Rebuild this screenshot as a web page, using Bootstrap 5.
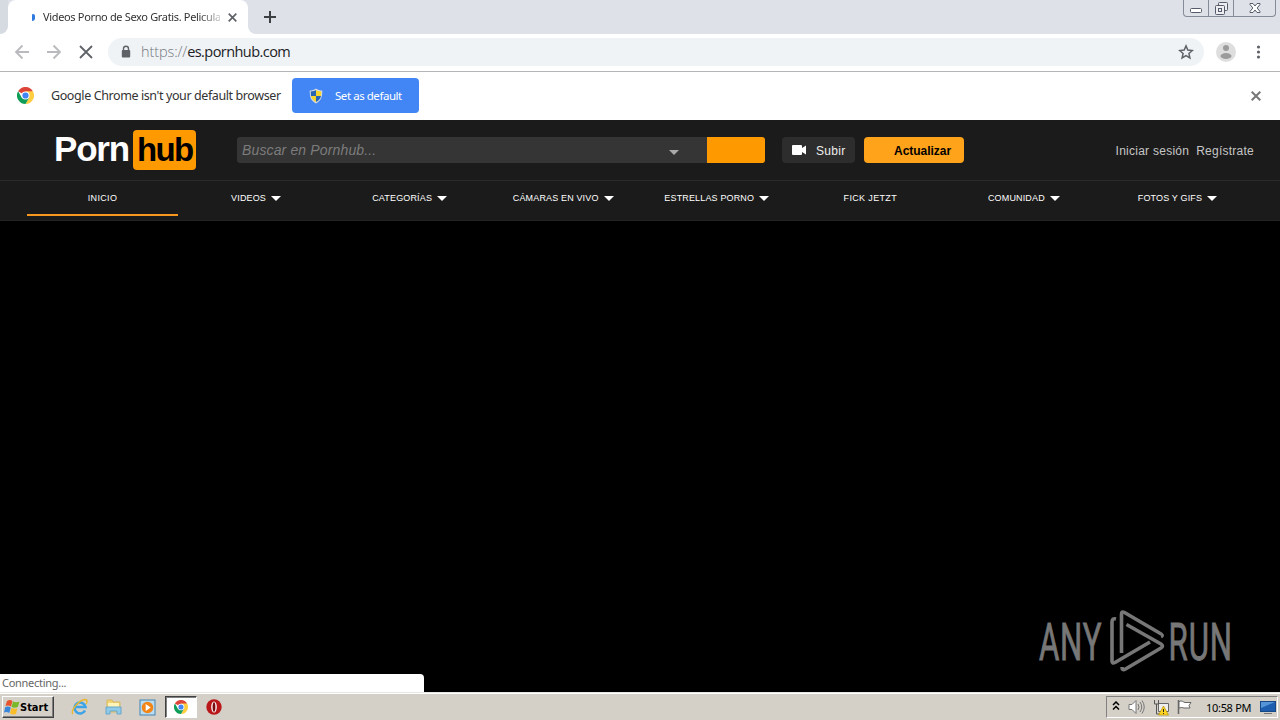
<!DOCTYPE html>
<html lang="es">
<head>
    <meta charset="utf-8">
    <title>Browser window</title>
    <meta name="viewport" content="width=device-width, initial-scale=1">
    <link href="https://cdn.jsdelivr.net/npm/bootstrap@5.3.0/dist/css/bootstrap.min.css" rel="stylesheet">
    <script src="https://cdn.jsdelivr.net/npm/bootstrap@5.3.0/dist/js/bootstrap.bundle.min.js"></script>
    <style>
        body {
            height: 720px;
            overflow: hidden;
            background: #000;
            font-family: "Noto Sans", "DejaVu Sans", sans-serif;
            font-size: 12px;
            line-height: 1;
            white-space: nowrap;
        }
        svg { display: block; flex: none; }

        /* Tab strip */
        .tab-strip { height: 34px; background: #dee1e8; }
        .tab-stub { width: 8px; background: #fff; }
        .tab-stub div { height: 34px; background: #d6dae1; border-radius: 0 0 8px 0; }
        .browser-tab { width: 240px; height: 34px; background: #fff; border-radius: 8px 8px 0 0; padding-left: 24px; }
        .tab-dot { width: 3px; height: 7px; background: #2d7be0; border-radius: 1px 2px 3px 0; margin-right: 8px; }
        .tab-title {
            width: 177px;
            line-height: 16px;
            color: #333;
            font-size: 11px;
            letter-spacing: -.34px;
            -webkit-mask-image: linear-gradient(90deg, #000 88%, rgba(0, 0, 0, .25));
        }
        .after-tab { width: 8px; background: #fff; }
        .after-tab div { height: 34px; background: #dee1e8; border-radius: 0 0 0 8px; }
        .win-buttons { width: 93px; height: 17px; border: 1px solid #858b98; border-top: 0; border-radius: 0 0 4px 4px; margin-right: 4px; }
        .win-buttons div + div { border-left: 1px solid #858b98; }

        /* Toolbar */
        .toolbar { height: 38px; background: #fff; border-bottom: 1px solid #b3b6b4; padding: 4px 0 5px 14px; }
        .address { width: 1096px; height: 28px; border-radius: 14px; background: #f0f3f6; padding: 0 10px 0 12px; }
        .address-text { font-size: 14.5px; line-height: 20px; color: #202124; font-family: "Open Sans", sans-serif; font-weight: 400; letter-spacing: -.56px; margin-left: 9px; }
        .address-text span { color: #73787d; font-weight: 300; letter-spacing: -.1px; }

        /* Default browser bar */
        .info-bar { height: 48px; background: #fff; color: #333; padding: 0 0 1px 17px; }
        .info-text { width: 241px; margin-left: 17px; font-size: 12.5px; line-height: 18px; letter-spacing: -.4px; }
        .btn-default-browser { width: 127px; height: 35px; background: #4285f4; color: #fff; border-radius: 4px; border: 0; font-size: 11.5px; letter-spacing: -.45px; padding: 0 0 0 17px; }

        /* Site header */
        .site { height: 101px; background: #1b1b1b; font-family: "Liberation Sans", Arial, sans-serif; border-bottom: 1px solid #232323; }
        .site-top { height: 61px; border-bottom: 1px solid #2b2b2b; padding-left: 54px; padding-right: 26px; }
        .logo-a { color: #fff; font-size: 35px; font-weight: 700; letter-spacing: -1.2px; width: 79px; line-height: 38px; padding-bottom: 3px; }
        .logo-b { color: #000; background: #f90; border-radius: 4px; width: 63px; height: 40px; font-size: 33px; font-weight: 700; letter-spacing: -1.6px; line-height: 39px; padding-left: 4px; }
        .search-box { width: 470px; height: 26px; background: #353535; border-radius: 3px 0 0 3px; margin-left: 41px; padding: 0 28px 0 5px; color: #7c7c7c; font-style: italic; font-size: 14px; letter-spacing: .14px; }
        .search-btn { width: 58px; height: 26px; background: #f90; border-radius: 0 3px 3px 0; }
        .upload-btn { width: 73px; height: 26px; margin-left: 17px; background: #2d2d2d; color: #eee; border-radius: 4px; padding-left: 10px; }
        .upload-btn span, .upgrade-btn, .login { padding-top: 1px; }
        .upgrade-btn { width: 100px; height: 26px; margin-left: 9px; background: #ffa31a; color: #000; border-radius: 4px; padding-left: 30px; font-weight: 700; letter-spacing: -.02px; }
        .login { color: #c6c6c6; letter-spacing: .25px; }
        .site-nav { height: 39px; padding: 0 27px; }
        .site-nav div { width: 151px; height: 35px; color: #fff; font-size: 9px; letter-spacing: .15px; border-bottom: 2px solid transparent; padding-top: 2px; }
        .site-nav .current { border-color: #f7971d; }
        .site-nav .current, .site-nav .plain { letter-spacing: .35px; }
        .arrow { border: 5px solid transparent; border-top-color: #fff; border-bottom: 0; margin-left: 5px; }
        .arrow-grey { border-top-color: #aaa; margin-top: 4px; }

        /* Bottom of the page and the taskbar */
        .stage { height: 471px; }
        .status { width: 424px; height: 18px; background: #fff; color: #666; border-radius: 0 4px 0 0; padding-left: 2px; font-size: 11px; line-height: 18px; letter-spacing: -.28px; }
        .watermark { margin: 0 48px 18px 0; }
        .taskbar-98 { height: 28px; background: #d4d0c8; border-top: 1px solid #e8e6e1; box-shadow: inset 0 1px #fff; padding: 3px 2px 2px; }
        .start-btn { width: 52px; height: 22px; border: 1px solid; border-color: #fff #404040 #404040 #fff; box-shadow: inset -1px -1px #808080; color: #000; padding-left: 1px; font-family: "DejaVu Sans Condensed", "DejaVu Sans", sans-serif; font-weight: 700; font-size: 11px; }
        .task-active { width: 32px; height: 22px; background: #fff; border: 1px solid; border-color: #404040 #fff #fff #404040; box-shadow: inset 1px 1px #808080; }
        .tray { width: 172px; height: 22px; border: 1px solid; border-color: #808080 #fff #fff #808080; color: #000; padding-left: 5px; font-size: 11px; }
    </style>
</head>
<body>
    <!-- Tab strip -->
    <div class="tab-strip d-flex">
        <div class="tab-stub"><div></div></div>
        <div class="browser-tab d-flex align-items-center">
            <div class="tab-dot"></div>
            <div class="tab-title">Videos Porno de Sexo Gratis. Pelicula</div>
            <svg class="ms-2" width="9" height="9" viewBox="0 0 9 9" stroke="#5f6368" stroke-width="1.7"><path d="M.7.7l7.6 7.6M8.3.7L.7 8.3"/></svg>
        </div>
        <div class="after-tab"><div></div></div>
        <svg class="mt-2 ms-2" width="12" height="18" viewBox="0 0 12 18" stroke="#3c4043" stroke-width="2"><path d="M6 3v12M0 9h12"/></svg>
        <div class="win-buttons d-flex ms-auto">
            <div class="d-flex align-items-center justify-content-center" style="width:24px">
                <svg width="12" height="16" fill="#fff" stroke="#555b68"><rect x=".5" y="8.5" width="11" height="4" rx="1"/></svg>
            </div>
            <div class="d-flex justify-content-center" style="width:25px">
                <svg width="13" height="16" fill="#eceef2" stroke="#555b68"><rect x="3.5" y="2.5" width="9" height="8" rx="1"/><rect x=".5" y="5.5" width="9" height="9" rx="1"/><rect x="3.5" y="8.5" width="3" height="3"/></svg>
            </div>
            <div class="d-flex justify-content-center flex-fill">
                <svg width="12" height="15" viewBox="0 0 12 15" fill="#fff" stroke="#555b68"><path d="M1 3.500h3l2 2.500 2-2.500h3v1L8.200 8l2.800 3.500v1H8L6 10l-2 2.500H1v-1L3.800 8 1 4.500z"/></svg>
            </div>
        </div>
    </div>

    <!-- Toolbar -->
    <div class="toolbar d-flex align-items-center">
        <svg width="94" height="16" viewBox="0 0 94 16" fill="none" stroke="#b8babd" stroke-width="1.8">
            <path d="M15 8H2M8.500 1.500L2 8l6.500 6.500M33 8h13M39.500 1.500L46 8l-6.500 6.500"/>
            <path stroke="#5f6368" stroke-width="1.8" d="M66 2l12 12M78 2L66 14"/>
        </svg>
        <div class="address d-flex align-items-center">
            <svg width="12" height="14" viewBox="0 0 12 14"><path d="M3.500 6V3.800a2.500 2.500 0 0 1 5 0V6" fill="none" stroke="#5f6368" stroke-width="1.4"/><rect x="1.800" y="5" width="8.400" height="7.500" rx="1" fill="#5f6368"/></svg>
            <div class="address-text"><span>https://</span>es.pornhub.com</div>
            <svg class="ms-auto" width="16" height="16" viewBox="0 0 16 16" fill="none" stroke="#5f6368" stroke-width="1.5"><path d="M8 1.900l1.800 4.200 4.500.4-3.400 3 1 4.400L8 11.600l-3.900 2.300 1-4.400-3.400-3 4.500-.4z"/></svg>
        </div>
        <svg style="margin-left:12px" width="20" height="20" viewBox="0 0 20 20"><circle cx="10" cy="10" r="10" fill="#dedede"/><circle cx="10" cy="6" r="3" fill="#9b9b9b"/><ellipse cx="10" cy="14" rx="5.5" ry="3" fill="#9b9b9b"/></svg>
        <svg style="margin-left:20px" width="5" height="16" viewBox="0 0 5 16" fill="#5f6368"><circle cx="2.5" cy="3" r="1.6"/><circle cx="2.5" cy="8" r="1.6"/><circle cx="2.5" cy="13" r="1.6"/></svg>
    </div>

    <!-- Default browser bar -->
    <div class="info-bar d-flex align-items-center">
        <svg width="17" height="17" viewBox="0 0 48 48">
            <g id="chrome">
                <path fill="#db4437" d="M24 24L3.200 12a24 24 0 0 1 41.600 0z"/>
                <path fill="#ffcd40" d="M24 24V12h20.800A24 24 0 0 1 24 48l10.400-18z"/>
                <path fill="#0f9d58" d="M24 24l10.400 6L24 48A24 24 0 0 1 3.200 12l10.400 18z"/>
                <circle cx="24" cy="24" r="11.5" fill="#fff"/><circle cx="24" cy="24" r="8.8" fill="#4285f4"/>
            </g>
        </svg>
        <div class="info-text">Google Chrome isn't your default browser</div>
        <button class="btn-default-browser d-flex align-items-center">
            <svg width="14" height="16" viewBox="0 0 14 16"><path d="M7 .5c2 1.500 4 2 6.300 2 0 6-.8 10-6.300 13C1.500 12.500.7 8.500.7 2.500 3 2.500 5 2 7 .5z" fill="#d6dbe2"/><path d="M7 2v6H2c-.2-1.500-.2-3-.2-4.500C4 3.400 5.500 3 7 2z" fill="#2865b5"/><path d="M7 2c1.500 1 3 1.400 5.200 1.500 0 1.500 0 3-.2 4.500H7z" fill="#f6d52e"/><path d="M2 8h5v6c-3-1.700-4.600-3.500-5-6z" fill="#f6d52e"/><path d="M7 8h5c-.4 2.500-2 4.300-5 6z" fill="#2865b5"/></svg>
            <span style="margin-left:12px">Set as default</span>
        </button>
        <svg class="ms-auto" style="margin-right:19px" width="10" height="10" viewBox="0 0 10 10" stroke="#777" stroke-width="2"><path d="M.7.7l8.600 8.600M9.300.7L.7 9.300"/></svg>
    </div>

    <!-- Site header -->
    <div class="site">
        <div class="site-top d-flex align-items-center">
            <div class="logo-a">Porn</div>
            <div class="logo-b">hub</div>
            <div class="search-box d-flex align-items-center">Buscar en Pornhub...<span class="arrow arrow-grey ms-auto"></span></div>
            <div class="search-btn"></div>
            <div class="upload-btn d-flex align-items-center">
                <svg width="14" height="10" viewBox="0 0 14 10" fill="#fff"><path d="M1 0h8q1 0 1 1v2l4-2.500v9L10 7v2q0 1-1 1H1q-1 0-1-1V1q0-1 1-1z"/></svg>
                <span style="margin-left:10px;letter-spacing:.3px">Subir</span>
            </div>
            <div class="upgrade-btn d-flex align-items-center">Actualizar</div>
            <div class="login d-flex ms-auto"><span>Iniciar sesión</span><span style="margin-left:7px">Regístrate</span></div>
        </div>
        <div class="site-nav d-flex justify-content-between">
            <div class="current d-flex align-items-center justify-content-center">INICIO</div>
            <div class="d-flex align-items-center justify-content-center">VIDEOS<span class="arrow"></span></div>
            <div class="d-flex align-items-center justify-content-center">CATEGORÍAS<span class="arrow"></span></div>
            <div class="d-flex align-items-center justify-content-center">CÁMARAS EN VIVO<span class="arrow"></span></div>
            <div class="d-flex align-items-center justify-content-center">ESTRELLAS PORNO<span class="arrow"></span></div>
            <div class="plain d-flex align-items-center justify-content-center">FICK JETZT</div>
            <div class="d-flex align-items-center justify-content-center">COMUNIDAD<span class="arrow"></span></div>
            <div class="d-flex align-items-center justify-content-center">FOTOS Y GIFS<span class="arrow"></span></div>
        </div>
    </div>

    <!-- Page body -->
    <div class="stage d-flex align-items-end justify-content-between">
        <div class="status">Connecting...</div>
        <svg class="watermark" width="194" height="66" viewBox="1038 608 194 66">
            <g fill="#777" stroke="#777" stroke-width=".9" font-family="Roboto, sans-serif" font-size="52">
                <text transform="translate(1039 659.5) scale(.6 1)" textLength="104">ANY</text>
                <text transform="translate(1168.500 659.5) scale(.6 1)" textLength="106">RUN</text>
            </g>
            <g fill="none" stroke="#777" stroke-width="3.6" stroke-linejoin="round" stroke-linecap="round">
                <path stroke-linecap="butt" d="M1121.500 653V614q0-3 3-1.500l35 20.500q4.500 2.500 1.500 3.500"/>
                <path stroke-linecap="butt" d="M1116 619q-4-1-4 3v39q0 3 3 1.500l35-20.500"/>
                <path stroke-linecap="butt" d="M1126.500 624.500l34.500 19.500q3 2 0 4l-35.500 21q-3.500 2-3.500-2"/>
            </g>
        </svg>
    </div>

    <!-- Taskbar -->
    <div class="taskbar-98 d-flex align-items-center">
        <div class="start-btn d-flex align-items-center">
            <svg width="16" height="16" viewBox="0 0 16 16"><path fill="#e8532b" d="M3 2q3-2 5.500 0L7 7.500Q4.500 6 1.500 7z"/><path fill="#79b829" d="M9 2.500q3 1.500 6.500 0L13.800 8q-3 1.500-6.300 0z"/><path fill="#3a86d8" d="M1.300 8q3-1 5.500.5L5.300 14q-2.500-1.700-5.300-.5z"/><path fill="#f8bd28" d="M7.400 9q3 1.500 6 .3L12 15q-2.700 1.200-6-.5z"/></svg>
            <span>Start</span>
        </div>
        <svg style="margin-left:17px" width="18" height="18" viewBox="0 0 18 18" fill="none"><path d="M14 12.500A5.500 5.500 0 1 1 14.500 9H5" stroke="#3ba3e6" stroke-width="2.6"/><path d="M2 16C-1 13 8 2 14 1.500c3 0 2 3 1 4.500" stroke="#e8b72e" stroke-width="1.4"/></svg>
        <svg style="margin-left:16px" width="17" height="18" viewBox="0 0 17 18"><path d="M2 2h5l1 2h7v10H2z" fill="#f2d477" stroke="#d8b960"/><path d="M3 5h11v4H3z" fill="#fff4b8"/><path d="M1 9h15v7h-4v-3H5v3H1z" fill="#8fcbe9" stroke="#66a6cb"/></svg>
        <svg style="margin-left:17px" width="17" height="17" viewBox="0 0 17 17"><rect x="1" y="1" width="15" height="15" fill="#b9dcf1" stroke="#4583b4"/><circle cx="8.5" cy="8.5" r="5.8" fill="#f28518"/><path d="M6.700 5v7l5-3.500z" fill="#fff"/></svg>
        <div class="task-active d-flex align-items-center justify-content-center" style="margin-left:9px">
            <svg width="14" height="14" viewBox="0 0 48 48"><use href="#chrome"/></svg>
        </div>
        <svg style="margin-left:9px" width="16" height="16" viewBox="0 0 16 16"><circle cx="8" cy="8" r="7.7" fill="#ba171b"/><ellipse cx="8" cy="8" rx="2.8" ry="5.5" fill="#fff"/><ellipse cx="8" cy="8" rx="1.4" ry="4.8" fill="#7a0c10"/></svg>

        <div class="tray d-flex align-items-center ms-auto">
            <svg width="8" height="12" viewBox="0 0 8 12" fill="none" stroke="#000" stroke-width="1.5"><path d="M1 4l3-3 3 3M1 8.500l3-3 3 3"/></svg>
            <svg style="margin-left:8px" width="17" height="16" viewBox="0 0 17 16" stroke="#777" fill="none"><path d="M1 5.500h3l4-4v13l-4-4H1z" fill="#fff"/><path d="M10 5q2 3 0 6M12 3q3.500 5 0 10M14 1.500q4.500 6.500 0 13"/></svg>
            <svg style="margin-left:8px" width="17" height="17" viewBox="0 0 17 17"><path d="M5.500 4.500h10v8h-10z" fill="#eee" stroke="#666"/><path d="M1.500 1v4h4V1M3.500 5v10h4" fill="none" stroke="#555"/><path d="M10.500 7l5 9h-10z" fill="#ffd522" stroke="#b99000" stroke-width=".7"/><path d="M10.500 10v3M10.500 14v1" stroke="#222"/></svg>
            <svg style="margin-left:6px" width="17" height="16" viewBox="0 0 17 16"><path d="M2.500 1v14" stroke="#666" stroke-width="1.5"/><path d="M3 2.500c3-1.500 4 .5 6 1h6l-2 3 1 2.500H8q-2-1-5 0z" fill="#fff" stroke="#666"/></svg>
            <span style="margin-left:13px;letter-spacing:-.3px">10:58 PM</span>
            <svg style="margin-left:9px" width="16" height="16" viewBox="0 0 16 16"><rect x=".5" y="2.5" width="15" height="10" fill="#1d5fae" stroke="#174a85"/><path d="M1 3h14L1 9z" fill="#5594d8"/><path d="M4 14.500h8" stroke="#777"/></svg>
        </div>
    </div>
</body>
</html>
